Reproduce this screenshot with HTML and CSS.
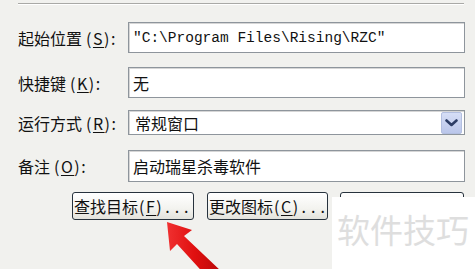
FILE: index.html
```html
<!DOCTYPE html>
<html lang="zh">
<head>
<meta charset="utf-8">
<title>快捷方式属性</title>
<link rel="stylesheet" href="styles.css">
</head>
<body>
<div class="dialog">
  <div class="rule"></div>
  <div class="row row-1">
    <span class="label">起始位置<span class="key">(<u>S</u>):</span></span>
    <div class="field"><span class="mono">"C:\Program Files\Rising\RZC"</span></div>
  </div>
  <div class="row row-2">
    <span class="label">快捷键<span class="key">(<u>K</u>):</span></span>
    <div class="field">无</div>
  </div>
  <div class="row row-3">
    <span class="label">运行方式<span class="key">(<u>R</u>):</span></span>
    <div class="field combo">
      <span class="combo-text">常规窗口</span>
      <span class="combo-btn">
        <svg width="13" height="8" viewBox="0 0 13 8"><path d="M1.5 1.5 L6.5 6 L11.5 1.5" fill="none" stroke="#2d3d66" stroke-width="2.6" stroke-linecap="round" stroke-linejoin="round"/></svg>
      </span>
    </div>
  </div>
  <div class="row row-4">
    <span class="label">备注<span class="key">(<u>O</u>):</span></span>
    <div class="field">启动瑞星杀毒软件</div>
  </div>
  <div class="buttons">
    <button class="btn btn-find">查找目标<span class="bkey">(<u>F</u>)</span><span class="dots">...</span></button>
    <button class="btn btn-icon">更改图标<span class="bkey">(<u>C</u>)</span><span class="dots">...</span></button>
    <button class="btn btn-adv"></button>
  </div>
</div>
<div class="watermark">软件技巧</div>
<svg class="arrow" width="475" height="269" viewBox="0 0 475 269">
  <defs>
    <linearGradient id="ag" x1="0" y1="0" x2="1" y2="0">
      <stop offset="0" stop-color="#f03030"/>
      <stop offset="0.5" stop-color="#e01010"/>
      <stop offset="1" stop-color="#b80808"/>
    </linearGradient>
  </defs>
  <polygon points="167,222 192,230 184,236 222,272 208,278 177,244 170,251" fill="url(#ag)"/>
</svg>
</body>
</html>
```
FILE: styles.css
```css
html, body {
  margin: 0;
  padding: 0;
}
body {
  width: 475px;
  height: 269px;
  overflow: hidden;
  background: #f1f1ee;
  font-family: "Noto Sans CJK SC", "Noto Sans", sans-serif;
  color: #111;
  position: relative;
}
.dialog {
  display: flex;
  flex-direction: column;
  padding: 3px 10px 0 18px;
}
.rule {
  height: 0;
  border-top: 1px solid #a9a9a6;
  border-bottom: 1px solid #ffffff;
  margin-right: 1px;
}
.row {
  display: flex;
  align-items: center;
}
.row-1 { margin-top: 17px; height: 31px; }
.row-2 { margin-top: 14px; height: 31px; }
.row-3 { margin-top: 12px; height: 25px; }
.row-4 { margin-top: 15px; height: 32px; }
.label {
  width: 110px;
  font-size: 16px;
  line-height: 20px;
  white-space: nowrap;
}
.key {
  margin-left: 4px;
  letter-spacing: 1.5px;
}
.key u, .bkey u {
  text-decoration-thickness: 1px;
  text-underline-offset: 2px;
}
.field {
  flex: 1;
  height: 100%;
  box-sizing: border-box;
  border: 1px solid #8e959c;
  box-shadow: inset 1px 1px 0 #d6d6d6;
  background: #ffffff;
  display: flex;
  align-items: center;
  padding-left: 4px;
  font-size: 16px;
  line-height: 20px;
}
.mono {
  font-family: "Liberation Mono", "DejaVu Sans Mono", monospace;
  font-size: 14.5px;
  letter-spacing: 0;
}
.combo {
  justify-content: space-between;
  padding-right: 2px;
}
.combo-text {
  padding-left: 2px;
}
.combo-btn {
  width: 19px;
  height: 20px;
  border-radius: 2px;
  background: linear-gradient(#d6def6, #bac6ea);
  border: 1px solid #b3bfe0;
  display: flex;
  align-items: center;
  justify-content: center;
}
.buttons {
  display: flex;
  margin-top: 10px;
  margin-left: 54px;
  gap: 13px;
}
.btn {
  height: 28px;
  box-sizing: border-box;
  border: 1px solid #27323d;
  border-radius: 3px;
  background: linear-gradient(#ffffff, #f3f3ef 60%, #e2e2dc);
  font-family: "Noto Sans CJK SC", "Noto Sans", sans-serif;
  font-size: 16px;
  line-height: 20px;
  color: #111;
  padding: 0 0 0 1px;
  white-space: nowrap;
  display: flex;
  align-items: center;
  justify-content: flex-start;
}
.bkey {
  margin-left: 1px;
  letter-spacing: 1.5px;
}
.dots {
  margin-left: 2px;
  letter-spacing: 5px;
}
.btn-find { width: 122px; }
.btn-icon { width: 121px; }
.btn-adv { width: 124px; margin-left: -1px; }
.watermark {
  position: absolute;
  left: 332px;
  top: 197px;
  right: 0;
  bottom: 0;
  background: #ffffff;
  color: #dedede;
  font-size: 33px;
  line-height: 40px;
  padding: 12px 0 0 5px;
  letter-spacing: 0;
  white-space: nowrap;
}
.arrow {
  position: absolute;
  left: 0;
  top: 0;
  pointer-events: none;
}
```
